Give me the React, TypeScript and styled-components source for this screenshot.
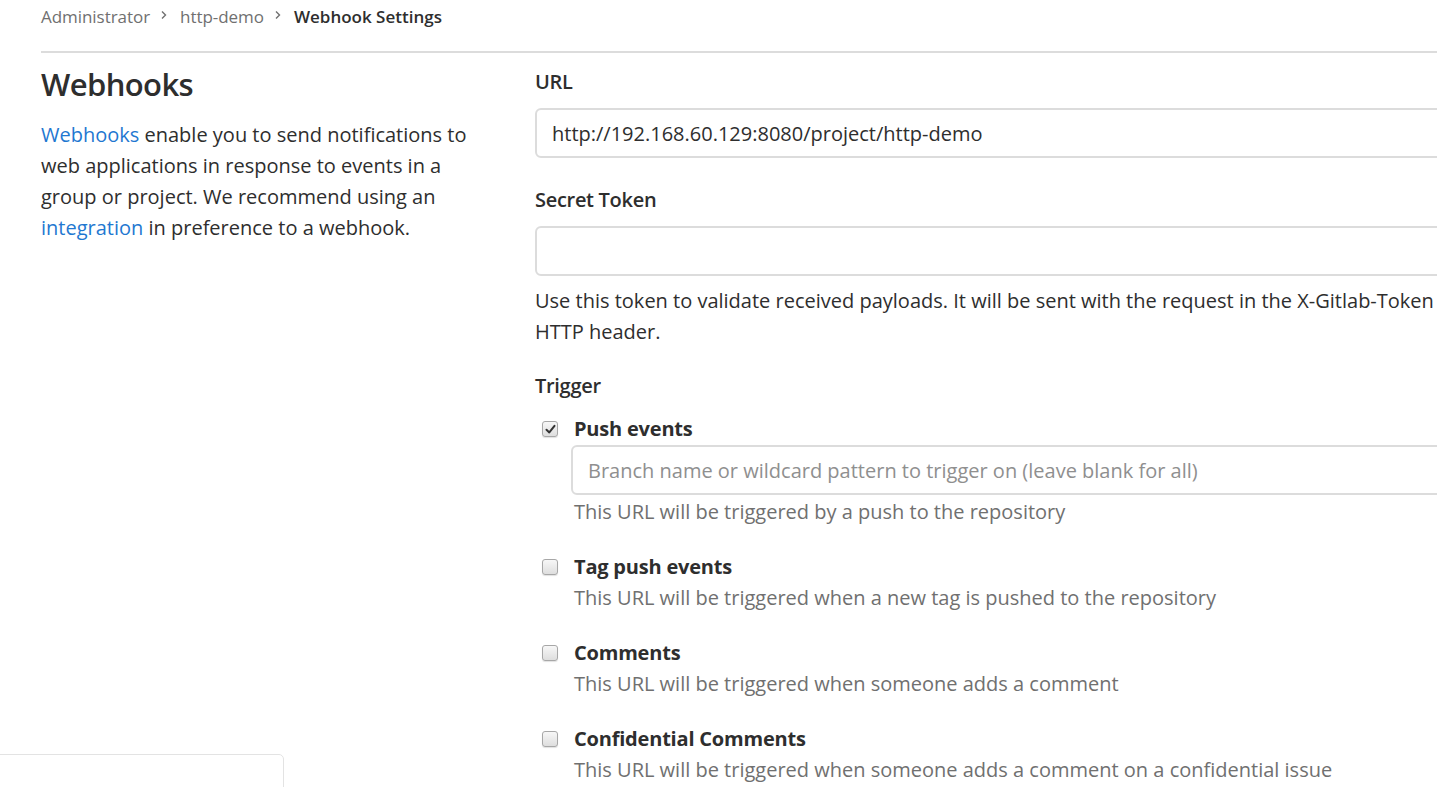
import React from "react";
import styled, { createGlobalStyle } from "styled-components";

const GlobalStyle = createGlobalStyle`
  html, body { margin: 0; padding: 0; background: #fff; }
  body {
    font-family: "Open Sans", "Noto Sans", sans-serif;
    color: #2e2e2e;
    overflow: hidden;
    width: 1437px;
    height: 787px;
  }
  * { box-sizing: border-box; }
`;

const Page = styled.div`
  padding-left: 41px;
  width: 1500px;
`;

const Breadcrumbs = styled.nav`
  display: flex;
  align-items: center;
  height: 32px;
  font-size: 17px;
  color: #707070;
`;

const Crumb = styled.span<{ $active?: boolean }>`
  color: ${(p) => (p.$active ? "#2e2e2e" : "#707070")};
  font-weight: ${(p) => (p.$active ? 600 : 400)};
  letter-spacing: ${(p) => (p.$active ? "0" : "-0.05px")};
`;

const Chevron = styled.svg`
  width: 8px;
  height: 10px;
  margin: 0 12px 2px 10px;
`;

const Divider = styled.hr`
  margin: 19px 0 0 0;
  border: none;
  border-top: 2px solid #dcdcdc;
  height: 0;
`;

const Row = styled.div`
  display: flex;
`;

const Side = styled.div`
  width: 440px;
  margin-right: 54px;
  padding-top: 11px;
`;

const Title = styled.h4`
  margin: 0;
  font-size: 31px;
  line-height: 40px;
  font-weight: 600;
  color: #2e2e2e;
  letter-spacing: -0.6px;
`;

const Lead = styled.p`
  margin: 15px 0 0 0;
  font-size: 20px;
  line-height: 31px;
`;

const Link = styled.a`
  color: #1f78d1;
  text-decoration: none;
`;

const Main = styled.div`
  width: 910px;
  padding-top: 14px;
`;

const Label = styled.div<{ $top?: number }>`
  font-size: 20px;
  line-height: 30px;
  font-weight: 600;
  margin-top: ${(p) => p.$top ?? 0}px;
  letter-spacing: -0.3px;
`;

const TextInput = styled.input<{ $top?: number }>`
  display: block;
  width: 1000px;
  height: 50px;
  margin-top: ${(p) => p.$top ?? 11}px;
  border: 2px solid #dcdcdc;
  border-radius: 6px;
  padding: 0 15px;
  font-family: inherit;
  font-size: 20px;
  color: #2e2e2e;
  outline: none;
  &::placeholder { color: #8f8f8f; }
`;

const Help = styled.p`
  margin: 9px 0 0 0;
  font-size: 20px;
  line-height: 31px;
  color: #2e2e2e;
`;

const Options = styled.div`
  margin-top: 13px;
  display: flex;
  flex-direction: column;
  gap: 25px;
`;

const Option = styled.div`
  display: grid;
  grid-template-columns: 39px 1fr;
`;

const Box = styled.span`
  margin: 7px 0 0 7px;
  width: 16px;
  height: 16px;
  border: 1px solid #a7a7a7;
  border-radius: 3px;
  background: linear-gradient(#f7f7f7, #dedede);
  box-shadow: 0 1px 1px rgba(0,0,0,0.12);
  display: flex;
  align-items: center;
  justify-content: center;
`;

const OptionBody = styled.div`
  display: flex;
  flex-direction: column;
`;

const OptionTitle = styled.div`
  font-size: 20px;
  line-height: 30px;
  font-weight: 700;
  letter-spacing: -0.2px;
`;

const OptionHelp = styled.div`
  font-size: 20px;
  line-height: 31px;
  color: #707070;
`;

const BranchInput = styled(TextInput)`
  margin: 1px 0 1px -3px;
`;

const Collapse = styled.div`
  position: fixed;
  left: -2px;
  top: 754px;
  width: 286px;
  height: 60px;
  border: 1px solid #e3e3e3;
  border-top-right-radius: 5px;
  background: #fff;
`;

const Check = () => (
  <svg width="11" height="11" viewBox="0 0 11 11">
    <path d="M1.5 5.8 L4.3 8.4 L9.5 1.8" fill="none" stroke="#333" strokeWidth="2" strokeLinecap="round" strokeLinejoin="round" />
  </svg>
);

const ChevronIcon = () => (
  <Chevron viewBox="0 0 8 10">
    <path d="M2 1.5 L5.5 5 L2 8.5" fill="none" stroke="#707070" strokeWidth="1.4" />
  </Chevron>
);

const options = [
  { title: "Push events", checked: true, branch: true, help: "This URL will be triggered by a push to the repository" },
  { title: "Tag push events", help: "This URL will be triggered when a new tag is pushed to the repository" },
  { title: "Comments", help: "This URL will be triggered when someone adds a comment" },
  { title: "Confidential Comments", help: "This URL will be triggered when someone adds a comment on a confidential issue" },
];

export default function App() {
  return (
    <>
      <GlobalStyle />
      <Page>
        <Breadcrumbs>
          <Crumb>Administrator</Crumb>
          <ChevronIcon />
          <Crumb>http-demo</Crumb>
          <ChevronIcon />
          <Crumb $active>Webhook Settings</Crumb>
        </Breadcrumbs>
        <Divider />
        <Row>
          <Side>
            <Title>Webhooks</Title>
            <Lead>
              <Link href="#">Webhooks</Link> enable you to send notifications to web applications in response to events in a group or project. We recommend using an <Link href="#">integration</Link> in preference to a webhook.
            </Lead>
          </Side>
          <Main>
            <Label>URL</Label>
            <TextInput defaultValue="http://192.168.60.129:8080/project/http-demo" />
            <Label $top={27}>Secret Token</Label>
            <TextInput />
            <Help>
              Use this token to validate received payloads. It will be sent with the request in the X-Gitlab-Token HTTP header.
            </Help>
            <Label $top={24}>Trigger</Label>
            <Options>
              {options.map((o) => (
                <Option key={o.title}>
                  <Box>{o.checked && <Check />}</Box>
                  <OptionBody>
                    <OptionTitle>{o.title}</OptionTitle>
                    {o.branch && (
                      <BranchInput placeholder="Branch name or wildcard pattern to trigger on (leave blank for all)" />
                    )}
                    <OptionHelp>{o.help}</OptionHelp>
                  </OptionBody>
                </Option>
              ))}
            </Options>
          </Main>
        </Row>
      </Page>
      <Collapse />
    </>
  );
}
